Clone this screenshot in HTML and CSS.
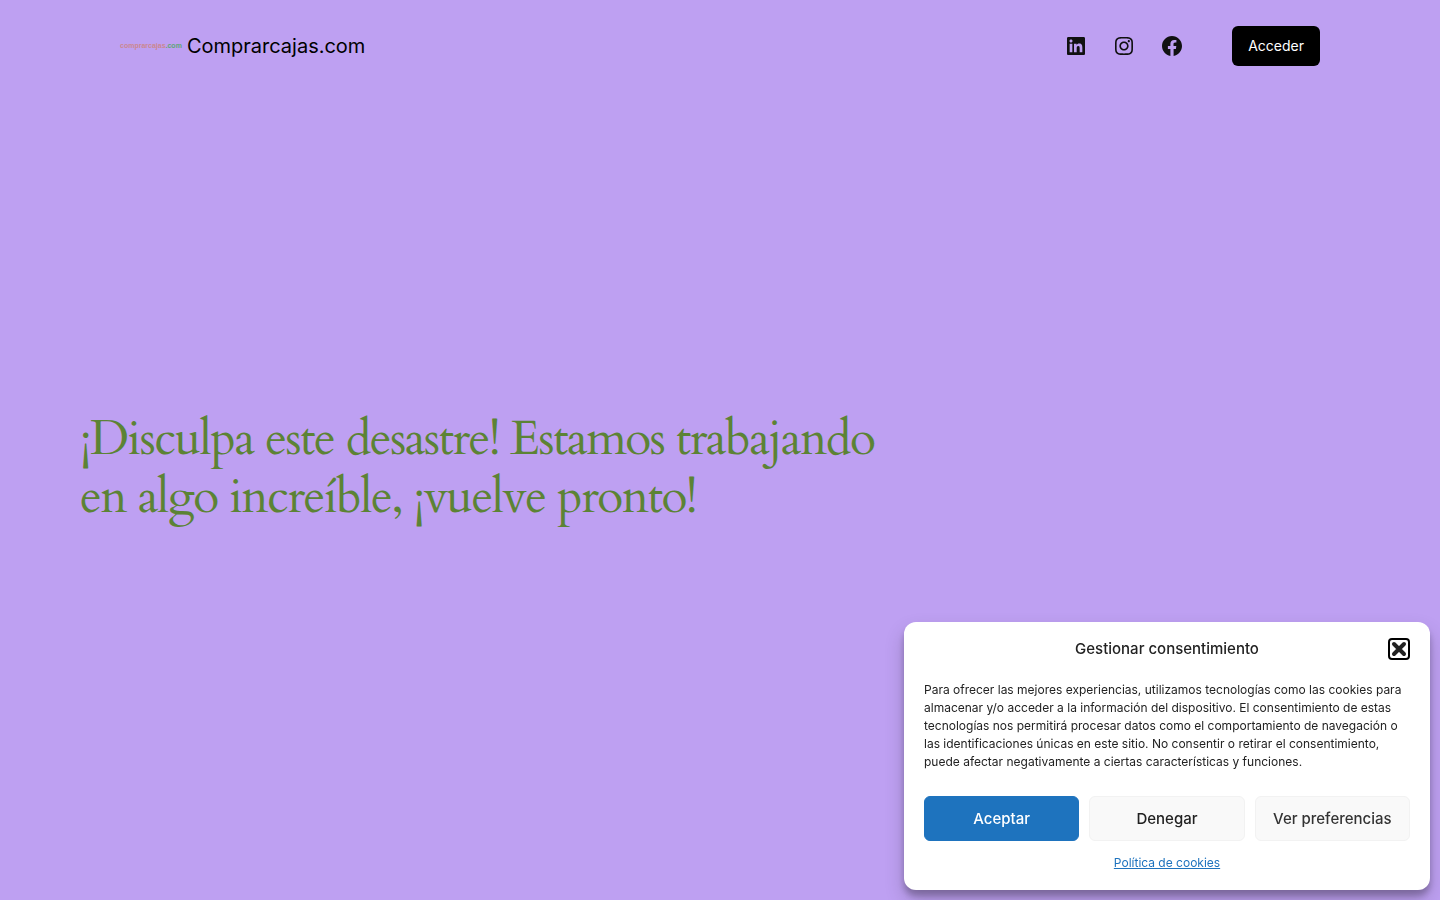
FILE: index.html
```html
<!DOCTYPE html>
<html lang="es">
<head>
<meta charset="utf-8">
<meta name="viewport" content="width=device-width, initial-scale=1">
<title>Comprarcajas.com</title>
<link rel="stylesheet" href="styles.css">
</head>
<body>
<header class="site-header">
  <div class="brand">
    <a class="brand-logo" href="#" aria-label="Inicio">comprarcajas<span class="brand-tld">.com</span></a>
    <a class="brand-name" href="#">Comprarcajas.com</a>
  </div>
  <div class="header-actions">
    <nav class="social" aria-label="Redes sociales">
      <a href="#" aria-label="LinkedIn"><svg viewBox="0 0 24 24"><path d="M19.7,3H4.3C3.582,3,3,3.582,3,4.3v15.4C3,20.418,3.582,21,4.3,21h15.4c0.718,0,1.3-0.582,1.3-1.3V4.3 C21,3.582,20.418,3,19.7,3z M8.339,18.338H5.667v-8.59h2.672V18.338z M7.004,8.574c-0.857,0-1.549-0.694-1.549-1.548 c0-0.855,0.691-1.548,1.549-1.548c0.854,0,1.547,0.694,1.547,1.548C8.551,7.881,7.858,8.574,7.004,8.574z M18.339,18.338h-2.669 v-4.177c0-0.996-0.017-2.278-1.387-2.278c-1.389,0-1.601,1.086-1.601,2.206v4.249h-2.667v-8.59h2.559v1.174h0.037 c0.356-0.675,1.227-1.387,2.526-1.387c2.703,0,3.203,1.779,3.203,4.092V18.338z"/></svg></a>
      <a href="#" aria-label="Instagram"><svg viewBox="0 0 24 24"><path d="M12,4.622c2.403,0,2.688,0.009,3.637,0.052c0.877,0.04,1.354,0.187,1.671,0.31c0.42,0.163,0.72,0.358,1.035,0.673 c0.315,0.315,0.51,0.615,0.673,1.035c0.123,0.317,0.27,0.794,0.31,1.671c0.043,0.949,0.052,1.234,0.052,3.637 s-0.009,2.688-0.052,3.637c-0.04,0.877-0.187,1.354-0.31,1.671c-0.163,0.42-0.358,0.72-0.673,1.035 c-0.315,0.315-0.615,0.51-1.035,0.673c-0.317,0.123-0.794,0.27-1.671,0.31c-0.949,0.043-1.233,0.052-3.637,0.052 s-2.688-0.009-3.637-0.052c-0.877-0.04-1.354-0.187-1.671-0.31c-0.42-0.163-0.72-0.358-1.035-0.673 c-0.315-0.315-0.51-0.615-0.673-1.035c-0.123-0.317-0.27-0.794-0.31-1.671C4.631,14.688,4.622,14.403,4.622,12 s0.009-2.688,0.052-3.637c0.04-0.877,0.187-1.354,0.31-1.671c0.163-0.42,0.358-0.72,0.673-1.035 c0.315-0.315,0.615-0.51,1.035-0.673c0.317-0.123,0.794-0.27,1.671-0.31C9.312,4.631,9.597,4.622,12,4.622 M12,3 C9.556,3,9.249,3.01,8.289,3.054C7.331,3.098,6.677,3.25,6.105,3.472C5.513,3.702,5.011,4.01,4.511,4.511 c-0.5,0.5-0.808,1.002-1.038,1.594C3.25,6.677,3.098,7.331,3.054,8.289C3.01,9.249,3,9.556,3,12c0,2.444,0.01,2.751,0.054,3.711 c0.044,0.958,0.196,1.612,0.418,2.185c0.23,0.592,0.538,1.094,1.038,1.594c0.5,0.5,1.002,0.808,1.594,1.038 c0.572,0.222,1.227,0.375,2.185,0.418C9.249,20.99,9.556,21,12,21s2.751-0.01,3.711-0.054c0.958-0.044,1.612-0.196,2.185-0.418 c0.592-0.23,1.094-0.538,1.594-1.038c0.5-0.5,0.808-1.002,1.038-1.594c0.222-0.572,0.375-1.227,0.418-2.185 C20.99,14.751,21,14.444,21,12s-0.01-2.751-0.054-3.711c-0.044-0.958-0.196-1.612-0.418-2.185c-0.23-0.592-0.538-1.094-1.038-1.594 c-0.5-0.5-1.002-0.808-1.594-1.038c-0.572-0.222-1.227-0.375-2.185-0.418C14.751,3.01,14.444,3,12,3L12,3z M12,7.378 c-2.552,0-4.622,2.069-4.622,4.622S9.448,16.622,12,16.622s4.622-2.069,4.622-4.622S14.552,7.378,12,7.378z M12,15 c-1.657,0-3-1.343-3-3s1.343-3,3-3s3,1.343,3,3S13.657,15,12,15z M16.804,6.116c-0.596,0-1.08,0.484-1.08,1.08 s0.484,1.08,1.08,1.08c0.596,0,1.08-0.484,1.08-1.08S17.401,6.116,16.804,6.116z"/></svg></a>
      <a href="#" aria-label="Facebook"><svg viewBox="0 0 24 24"><path d="M12 2C6.5 2 2 6.5 2 12c0 5 3.7 9.1 8.4 9.9v-7H7.9V12h2.5V9.8c0-2.5 1.5-3.9 3.8-3.9 1.1 0 2.2.2 2.2.2v2.5h-1.3c-1.2 0-1.6.8-1.6 1.6V12h2.8l-.4 2.9h-2.3v7C18.3 21.1 22 17 22 12c0-5.5-4.5-10-10-10z"/></svg></a>
    </nav>
    <a class="login" href="#">Acceder</a>
  </div>
</header>

<main class="notice">
  <h1 class="notice-title">¡Disculpa este desastre! Estamos trabajando en algo increíble, ¡vuelve pronto!</h1>
</main>

<section class="consent" role="dialog" aria-labelledby="consent-title">
  <div class="consent-header">
    <h2 class="consent-title" id="consent-title">Gestionar consentimiento</h2>
    <button class="consent-close" type="button" aria-label="Cerrar"><svg viewBox="0 0 16 16"><path d="M3 3l10 10M13 3L3 13"/></svg></button>
  </div>
  <p class="consent-text">Para ofrecer las mejores experiencias, utilizamos tecnologías como las cookies para almacenar y/o acceder a la información del dispositivo. El consentimiento de estas tecnologías nos permitirá procesar datos como el comportamiento de navegación o las identificaciones únicas en este sitio. No consentir o retirar el consentimiento, puede afectar negativamente a ciertas características y funciones.</p>
  <div class="consent-buttons">
    <button class="btn btn-accept" type="button">Aceptar</button>
    <button class="btn btn-deny" type="button">Denegar</button>
    <button class="btn" type="button">Ver preferencias</button>
  </div>
  <a class="consent-link" href="#">Política de cookies</a>
</section>
</body>
</html>
```
FILE: styles.css
```css
* {
  box-sizing: border-box;
}

body {
  margin: 0;
  min-height: 100vh;
  display: flex;
  flex-direction: column;
  background: #bea0f2;
  color: #000;
  font-family: Inter, "Liberation Sans", sans-serif;
}

.site-header {
  display: flex;
  align-items: center;
  justify-content: space-between;
  width: 100%;
  max-width: 1200px;
  margin: 0 auto;
  padding: 26px 0;
}

.brand {
  display: flex;
  align-items: center;
  gap: 5px;
}

.brand a {
  text-decoration: none;
}

.brand-logo {
  color: #cb8791;
  font-family: "Liberation Sans", sans-serif;
  font-size: 7px;
  font-weight: 700;
  line-height: 8px;
}

.brand-tld {
  color: #5fa577;
}

.brand-name {
  color: #000;
  font-size: 20px;
  line-height: 28px;
}

.header-actions {
  display: flex;
  align-items: center;
  gap: 48px;
}

.social {
  display: flex;
  gap: 24px;
}

.social a {
  display: block;
  color: #111;
}

.social svg {
  display: block;
  width: 24px;
  height: 24px;
  fill: currentColor;
}

.login {
  padding: 10px 16px;
  border-radius: 6px;
  background: #000;
  color: #fff;
  font-size: 14px;
  line-height: 20px;
  text-decoration: none;
}

.notice {
  flex: 1;
  display: flex;
  align-items: center;
  padding: 0 80px 56px;
}

.notice-title {
  max-width: 830px;
  margin: 0;
  color: #5c8335;
  font-family: Cardo, "Liberation Serif", serif;
  font-size: 48px;
  font-weight: 400;
  line-height: 58px;
  letter-spacing: -0.03em;
}

.consent {
  position: fixed;
  right: 10px;
  bottom: 10px;
  display: grid;
  width: 526px;
  max-width: calc(100vw - 20px);
  padding: 16px 20px 18px;
  border-radius: 12px;
  background: #fff;
  color: #222;
  box-shadow: 0 10px 20px rgba(0, 0, 0, 0.19), 0 6px 6px rgba(0, 0, 0, 0.23);
}

.consent-header {
  display: grid;
  grid-template-columns: 22px 1fr 22px;
  align-items: center;
}

.consent-title {
  grid-column: 2;
  margin: 0;
  font-size: 15px;
  font-weight: 500;
  line-height: 22px;
  text-align: center;
}

.consent-close {
  width: 22px;
  height: 22px;
  padding: 1px;
  border: 2px solid #000;
  border-radius: 4px;
  background: #fff;
}

.consent-close svg {
  display: block;
  width: 16px;
  height: 16px;
  fill: none;
  stroke: #222;
  stroke-width: 4;
  stroke-linecap: round;
}

.consent-text {
  margin: 21px 0 25px;
  font-size: 12px;
  line-height: 18px;
}

.consent-buttons {
  display: grid;
  grid-template-columns: repeat(3, 1fr);
  gap: 10px;
}

.btn {
  height: 45px;
  padding: 0 10px;
  border: 1px solid #f2f2f2;
  border-radius: 6px;
  background: #f9f9f9;
  color: #333;
  font: 500 15px/20px Inter, "Liberation Sans", sans-serif;
}

.btn-accept {
  border-color: #1e73be;
  background: #1e73be;
  color: #fff;
}

.btn-deny {
  color: #222;
}

.consent-link {
  justify-self: center;
  margin-top: 13px;
  color: #1e73be;
  font-size: 12px;
  line-height: 18px;
}
```
